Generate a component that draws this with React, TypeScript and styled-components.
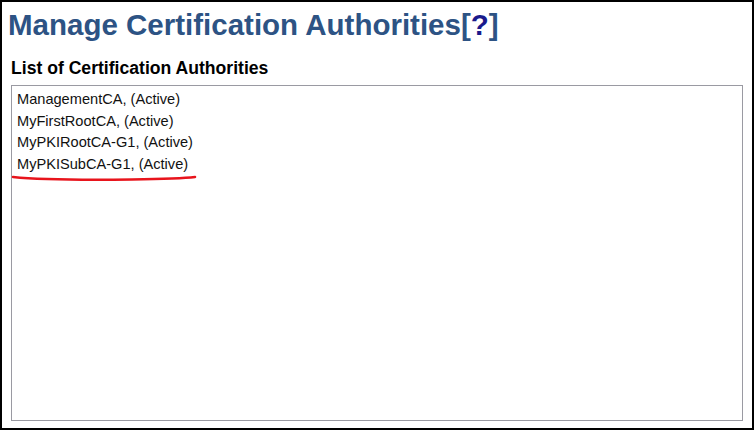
import React from "react";
import styled, { createGlobalStyle } from "styled-components";

const Global = createGlobalStyle`
  html, body { margin: 0; padding: 0; background: #ffffff; }
  body { font-family: "Liberation Sans", Arial, sans-serif; }
`;

const Frame = styled.div`
  box-sizing: border-box;
  width: 754px;
  height: 430px;
  border: 2px solid #000;
  padding: 4px 9px 7px 9px;
  display: flex;
  flex-direction: column;
  background: #fff;
`;

const Title = styled.h1`
  margin: 0 0 0 -3px;
  font-family: "Liberation Sans", Arial, sans-serif;
  font-weight: bold;
  font-size: 29.5px;
  line-height: 38px;
  color: #2d5384;
`;

const Help = styled.a`
  color: #1a1a8c;
  text-decoration: none;
`;

const SubTitle = styled.h2`
  margin: 13px 0 0 0;
  font-family: "Liberation Sans", Arial, sans-serif;
  font-weight: bold;
  font-size: 17.6px;
  line-height: 22px;
  color: #000;
`;

const ListBox = styled.div`
  position: relative;
  box-sizing: border-box;
  margin-top: 6px;
  flex: 1;
  border: 1px solid #9a9aa2;
  padding: 3px 5px;
  display: flex;
  flex-direction: column;
`;

const Item = styled.div`
  font-family: "Liberation Sans", Arial, sans-serif;
  font-size: 14.6px;
  line-height: 21.7px;
  color: #111;
  white-space: nowrap;
`;

const Mark = styled.svg`
  position: absolute;
  left: 0;
  top: 87px;
  width: 190px;
  height: 10px;
  overflow: visible;
`;

const items = [
  "ManagementCA, (Active)",
  "MyFirstRootCA, (Active)",
  "MyPKIRootCA-G1, (Active)",
  "MyPKISubCA-G1, (Active)",
];

export default function App() {
  return (
    <>
      <Global />
      <Frame>
        <Title>
          Manage Certification Authorities[<Help href="#">?</Help>]
        </Title>
        <SubTitle>List of Certification Authorities</SubTitle>
        <ListBox>
          {items.map((t) => (
            <Item key={t}>{t}</Item>
          ))}
          <Mark viewBox="0 0 190 10">
            <path
              d="M1 4 C 30 7, 80 7, 120 6.5 C 150 6, 170 5.5, 183 4"
              fill="none"
              stroke="#e8141c"
              strokeWidth="2.6"
              strokeLinecap="round"
            />
          </Mark>
        </ListBox>
      </Frame>
    </>
  );
}
